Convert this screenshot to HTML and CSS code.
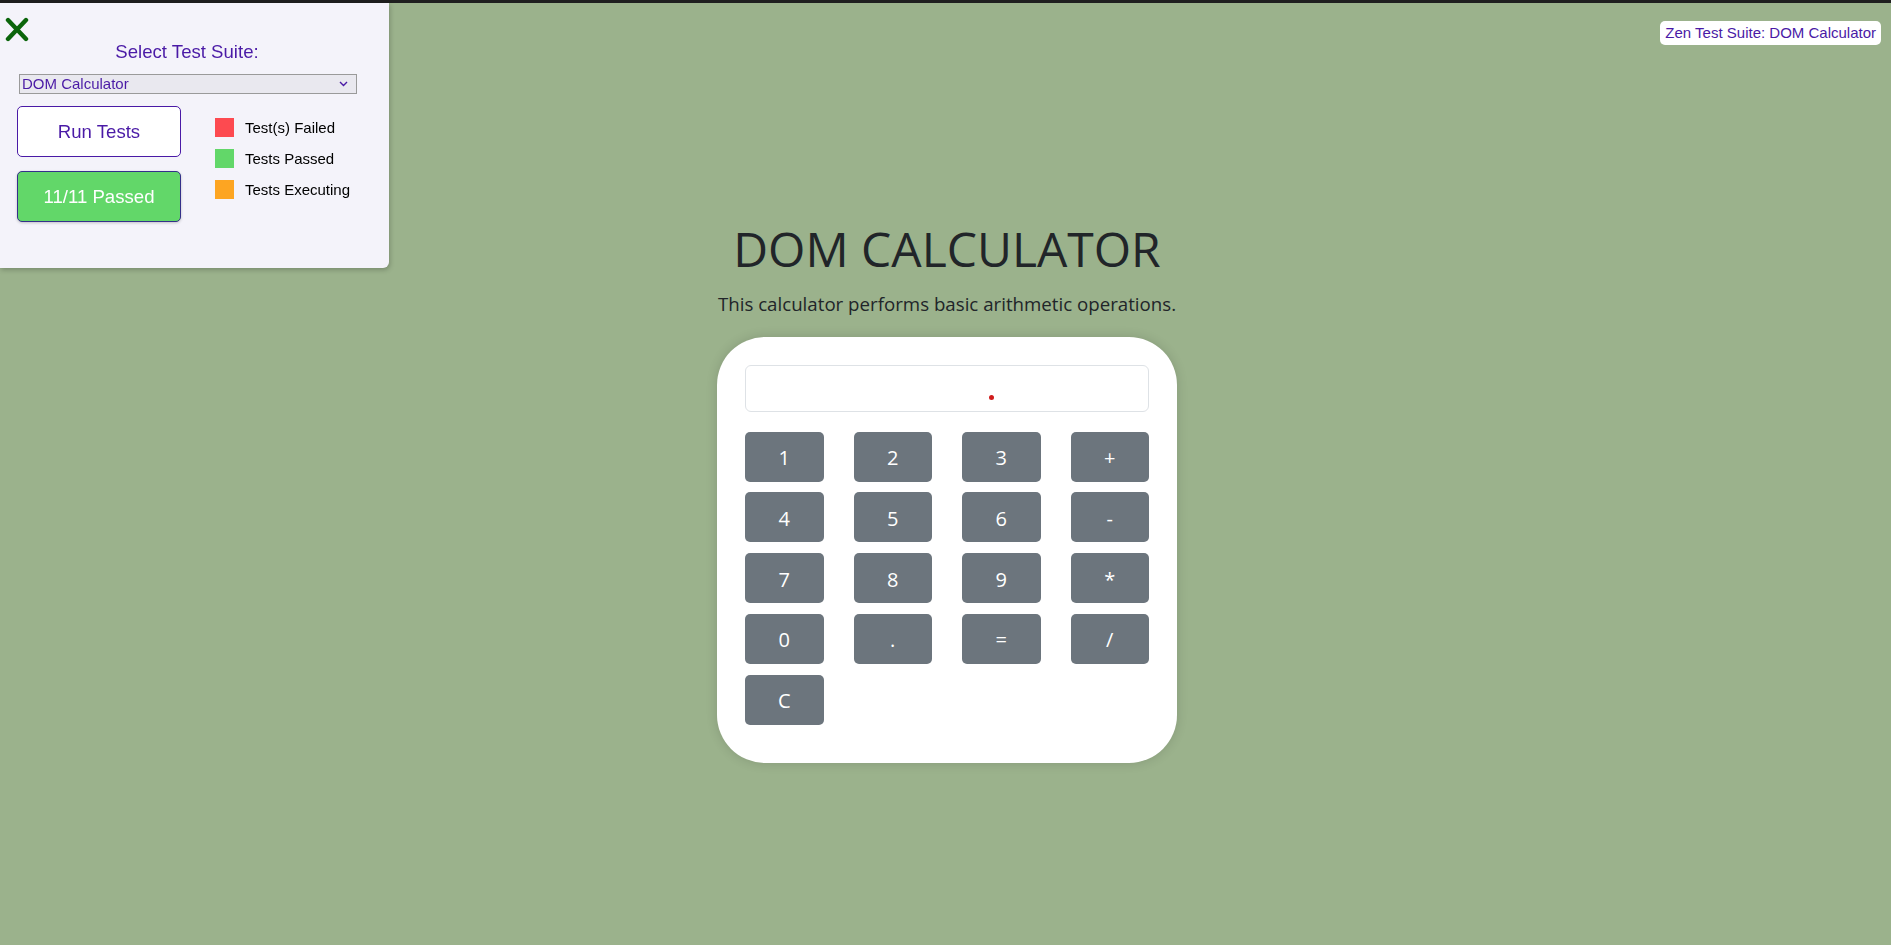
FILE: index.html
```html
<!DOCTYPE html>
<html lang="en">
<head>
<meta charset="utf-8">
<title>DOM Calculator</title>
<link rel="stylesheet" href="styles.css">
</head>
<body>
<aside class="panel">
  <button class="close" aria-label="Close">
    <svg width="24" height="25" viewBox="0 0 24 25"><path d="M3 3 L21 22 M21 3 L3 22" stroke="#0b650b" stroke-width="4.4" stroke-linecap="round" fill="none"/></svg>
  </button>
  <h2 class="suite-title">Select Test Suite:</h2>
  <div class="select-wrap">
    <select class="suite-select"><option>DOM Calculator</option></select>
    <svg class="chev" width="9" height="6" viewBox="0 0 9 6"><path d="M1 1 L4.5 4.5 L8 1" stroke="#4a1aa6" stroke-width="1.4" fill="none"/></svg>
  </div>
  <div class="controls">
    <div class="btn-col">
      <button class="run-btn">Run Tests</button>
      <button class="pass-btn">11/11 Passed</button>
    </div>
    <ul class="legend">
      <li class="legend-item"><span class="sw sw-fail"></span>Test(s) Failed</li>
      <li class="legend-item"><span class="sw sw-pass"></span>Tests Passed</li>
      <li class="legend-item"><span class="sw sw-exec"></span>Tests Executing</li>
    </ul>
  </div>
</aside>

<div class="badge">Zen Test Suite: DOM Calculator</div>

<main class="main">
  <h1 class="title">DOM CALCULATOR</h1>
  <p class="lead">This calculator performs basic arithmetic operations.</p>
  <section class="calc">
    <div class="display"><span class="dot"></span></div>
    <div class="keys">
      <button class="key">1</button>
      <button class="key">2</button>
      <button class="key">3</button>
      <button class="key">+</button>
      <button class="key">4</button>
      <button class="key">5</button>
      <button class="key">6</button>
      <button class="key">-</button>
      <button class="key">7</button>
      <button class="key">8</button>
      <button class="key">9</button>
      <button class="key">*</button>
      <button class="key">0</button>
      <button class="key">.</button>
      <button class="key">=</button>
      <button class="key">/</button>
      <button class="key">C</button>
    </div>
  </section>
</main>
</body>
</html>
```

FILE: styles.css
```css
html, body {
  margin: 0;
  padding: 0;
}
body {
  background: #9bb28c;
  border-top: 3px solid #1f1f1f;
  min-height: 942px;
  font-family: "Open Sans", "Noto Sans", sans-serif;
  color: #212529;
}

/* ---------- test panel ---------- */
.panel {
  position: fixed;
  top: 3px;
  left: 0;
  width: 389px;
  height: 265px;
  box-sizing: border-box;
  background: #f4f3fa;
  border-radius: 0 0 6px 0;
  box-shadow: 1px 2px 5px rgba(0, 0, 0, 0.22);
  font-family: "Liberation Sans", Arial, sans-serif;
  z-index: 5;
}
.close {
  display: block;
  margin: 14px 0 0 5px;
  padding: 0;
  width: 24px;
  height: 25px;
  border: 0;
  background: none;
}
.close svg { display: block; }
.suite-title {
  margin: -1px 0 0;
  padding-right: 15px;
  text-align: center;
  font-size: 18.6px;
  font-weight: 400;
  line-height: 21px;
  color: #4a1aa6;
}
.select-wrap {
  position: relative;
  margin: 12px 0 0 19px;
  width: 338px;
  height: 20px;
}
.suite-select {
  appearance: none;
  -webkit-appearance: none;
  display: block;
  width: 100%;
  height: 20px;
  margin: 0;
  padding: 0 0 0 2px;
  border: 1px solid #9a9a9a;
  border-radius: 0;
  background: #e9e8ef;
  color: #4a1aa6;
  font-family: "Liberation Sans", Arial, sans-serif;
  font-size: 15px;
  line-height: 18px;
}
.chev {
  position: absolute;
  right: 9px;
  top: 7px;
}
.controls {
  display: flex;
  margin-top: 12px;
  padding-left: 17px;
}
.btn-col {
  display: flex;
  flex-direction: column;
  gap: 14px;
  width: 164px;
}
.run-btn, .pass-btn {
  height: 51px;
  border-radius: 5px;
  font-family: "Liberation Sans", Arial, sans-serif;
  font-size: 18.6px;
  padding: 0;
}
.run-btn {
  background: #ffffff;
  border: 1px solid #4a1aa6;
  color: #4a1aa6;
}
.pass-btn {
  background: #62d769;
  border: 1px solid #34308a;
  color: #ffffff;
  box-shadow: 0 1px 3px rgba(0, 0, 0, 0.2);
}
.legend {
  list-style: none;
  margin: 0 0 0 34px;
  padding: 12px 0 0;
  display: flex;
  flex-direction: column;
  gap: 12px;
}
.legend-item {
  display: flex;
  align-items: center;
  gap: 11px;
  height: 19px;
  font-size: 15px;
  color: #000;
}
.sw {
  display: block;
  width: 19px;
  height: 19px;
}
.sw-fail { background: #fd4a50; }
.sw-pass { background: #62d769; }
.sw-exec { background: #fda522; }

/* ---------- badge ---------- */
.badge {
  position: fixed;
  top: 21px;
  right: 10px;
  height: 24px;
  padding: 0 5px;
  background: #ffffff;
  border-radius: 5px;
  font-family: "Liberation Sans", Arial, sans-serif;
  font-size: 15px;
  line-height: 24px;
  color: #4a1aa6;
}

/* ---------- calculator ---------- */
.main {
  display: flex;
  flex-direction: column;
  align-items: center;
  padding: 217px 0 0 3px;
}
.title {
  margin: 0 0 11px;
  font-size: 48px;
  font-weight: 400;
  line-height: 57.6px;
}
.lead {
  margin: 0 0 18px;
  font-size: 18.7px;
  line-height: 30px;
}
.calc {
  width: 460px;
  box-sizing: border-box;
  padding: 28px 28px 38px;
  background: #ffffff;
  border-radius: 48px;
  box-shadow: 0 0 12px rgba(0, 0, 0, 0.14);
}
.display {
  position: relative;
  height: 47px;
  box-sizing: border-box;
  border: 1px solid #dee2e6;
  border-radius: 6px;
  margin-bottom: 20px;
}
.dot {
  position: absolute;
  left: 243px;
  top: 29px;
  width: 5px;
  height: 5px;
  border-radius: 50%;
  background: #d01c1c;
}
.keys {
  display: grid;
  grid-template-columns: repeat(4, 1fr);
  column-gap: 30px;
  row-gap: 10.75px;
}
.key {
  height: 50px;
  padding: 2px 0 0;
  border: 0;
  border-radius: 5px;
  background: #6c757d;
  color: #ffffff;
  font-family: "Open Sans", "Noto Sans", sans-serif;
  font-size: 20px;
}
```
